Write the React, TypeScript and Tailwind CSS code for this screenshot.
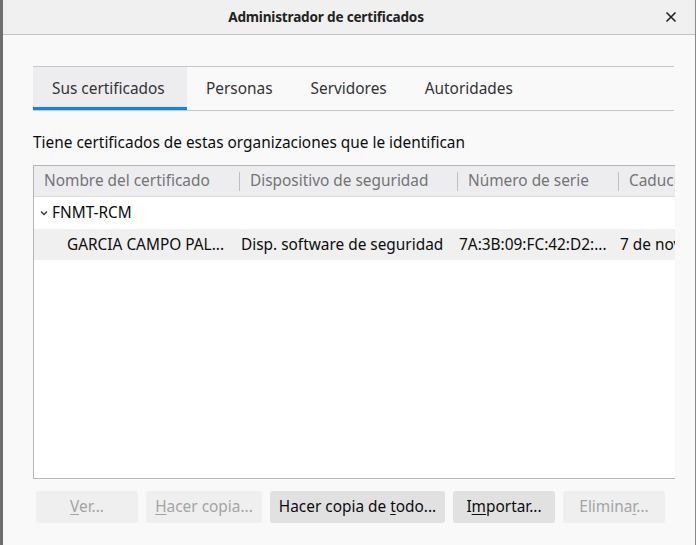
import React from 'react';

const tabs = ['Sus certificados', 'Personas', 'Servidores', 'Autoridades'];

const columns = [
  { label: 'Nombre del certificado', width: 'w-[205px]' },
  { label: 'Dispositivo de seguridad', width: 'w-[218px]' },
  { label: 'Número de serie', width: 'w-[161px]' },
  { label: 'Caducidad', width: 'w-[120px]' },
];

const Btn: React.FC<{ label: React.ReactNode; width: string; disabled?: boolean }> = ({ label, width, disabled }) => (
  <div
    className={`${width} h-[32px] flex items-center justify-center rounded-[3px] text-[15.4px] ${
      disabled ? 'bg-[#efefef] text-[#a4a4a4]' : 'bg-[#e1e1e2] text-[#0c0c0d]'
    }`}
  >
    <span>{label}</span>
  </div>
);

const App: React.FC = () => {
  return (
    <div className="w-[696px] h-[545px] flex bg-[#6e6e6e] overflow-hidden" style={{ fontFamily: '"Noto Sans", sans-serif' }}>
      <div className="w-[3px] shrink-0" />
      <div className="flex-1 min-w-0 flex flex-col bg-[#f9f9fa] border-r border-[#8a8a8a]">
        <div className="h-[35px] shrink-0 flex items-center justify-center relative bg-[#f0f0f0] border-b border-[#c2c2c2] pr-[46px]">
          <span className="text-[13.6px] font-bold text-[#222] tracking-[-0.2px]">Administrador de certificados</span>
          <span className="absolute right-[18px] top-[11px]">
            <svg width="12" height="12" viewBox="0 0 12 12">
              <path d="M1.5 1.5 L10.5 10.5 M10.5 1.5 L1.5 10.5" stroke="#222" strokeWidth="1.6" />
            </svg>
          </span>
        </div>

        <div className="pl-[30px] pt-[31px] flex flex-col">
          <div className="w-[641px] flex border-t border-b border-[#c7c7c8] h-[45px]">
            {tabs.map((t, i) => (
              <div
                key={t}
                className={`relative flex items-center text-[15.4px] text-[#333] ${
                  i === 0 ? 'bg-[#ededf0] px-[19px] w-[154px]' : 'px-[19px]'
                }`}
              >
                {t}
                {i === 0 && <div className="absolute left-0 right-0 bottom-0 h-[3px] bg-[#0a84ff]" />}
              </div>
            ))}
          </div>

          <div className="mt-[21px] text-[15.4px] text-[#0c0c0d] leading-[22px]">
            Tiene certificados de estas organizaciones que le identifican
          </div>

          <div className="mt-[11px] w-[642px] h-[314px] border border-r-0 border-[#b5b5b5] bg-white flex flex-col overflow-hidden">
            <div className="h-[31px] shrink-0 flex bg-[#ededf0] border-b border-[#dcdcdc] text-[15.4px] text-[#737373] whitespace-nowrap">
              {columns.map((c, i) => (
                <div key={c.label} className={`${c.width} shrink-0 flex items-center overflow-hidden`}>
                  {i > 0 && <div className="w-px h-[19px] bg-[#c0c0c0] mr-[10px]" />}
                  <span className={i === 0 ? 'pl-[10px]' : ''}>{c.label}</span>
                </div>
              ))}
            </div>
            <div className="h-[32px] flex items-center text-[15.4px] text-[#0c0c0d] pl-[5px]">
              <svg width="10" height="10" viewBox="0 0 10 10" className="mr-[3px]">
                <path d="M2 3.5 L5 6.5 L8 3.5" stroke="#333" strokeWidth="1.3" fill="none" />
              </svg>
              FNMT-RCM
            </div>
            <div className="h-[31px] flex items-center bg-[#f0f0f0] text-[15.4px] text-[#0c0c0d] whitespace-nowrap overflow-hidden">
              <div className="w-[207px] shrink-0 pl-[33px]">GARCIA CAMPO PAL...</div>
              <div className="w-[218px] shrink-0">Disp. software de seguridad</div>
              <div className="w-[161px] shrink-0">7A:3B:09:FC:42:D2:...</div>
              <div className="shrink-0">7 de noviembre de 2022</div>
            </div>
          </div>

          <div className="mt-[12px] flex gap-[8px] pl-[3px]">
            <Btn width="w-[102px]" disabled label={<><span className="underline underline-offset-2">V</span>er...</>} />
            <Btn width="w-[116px]" disabled label={<><span className="underline underline-offset-2">H</span>acer copia...</>} />
            <Btn width="w-[175px]" label={<>Hacer copia de <span className="underline underline-offset-2">t</span>odo...</>} />
            <Btn width="w-[102px]" label={<>I<span className="underline underline-offset-2">m</span>portar...</>} />
            <Btn width="w-[102px]" disabled label={<>Elimina<span className="underline underline-offset-2">r</span>...</>} />
          </div>
        </div>
      </div>
    </div>
  );
};

export default App;
